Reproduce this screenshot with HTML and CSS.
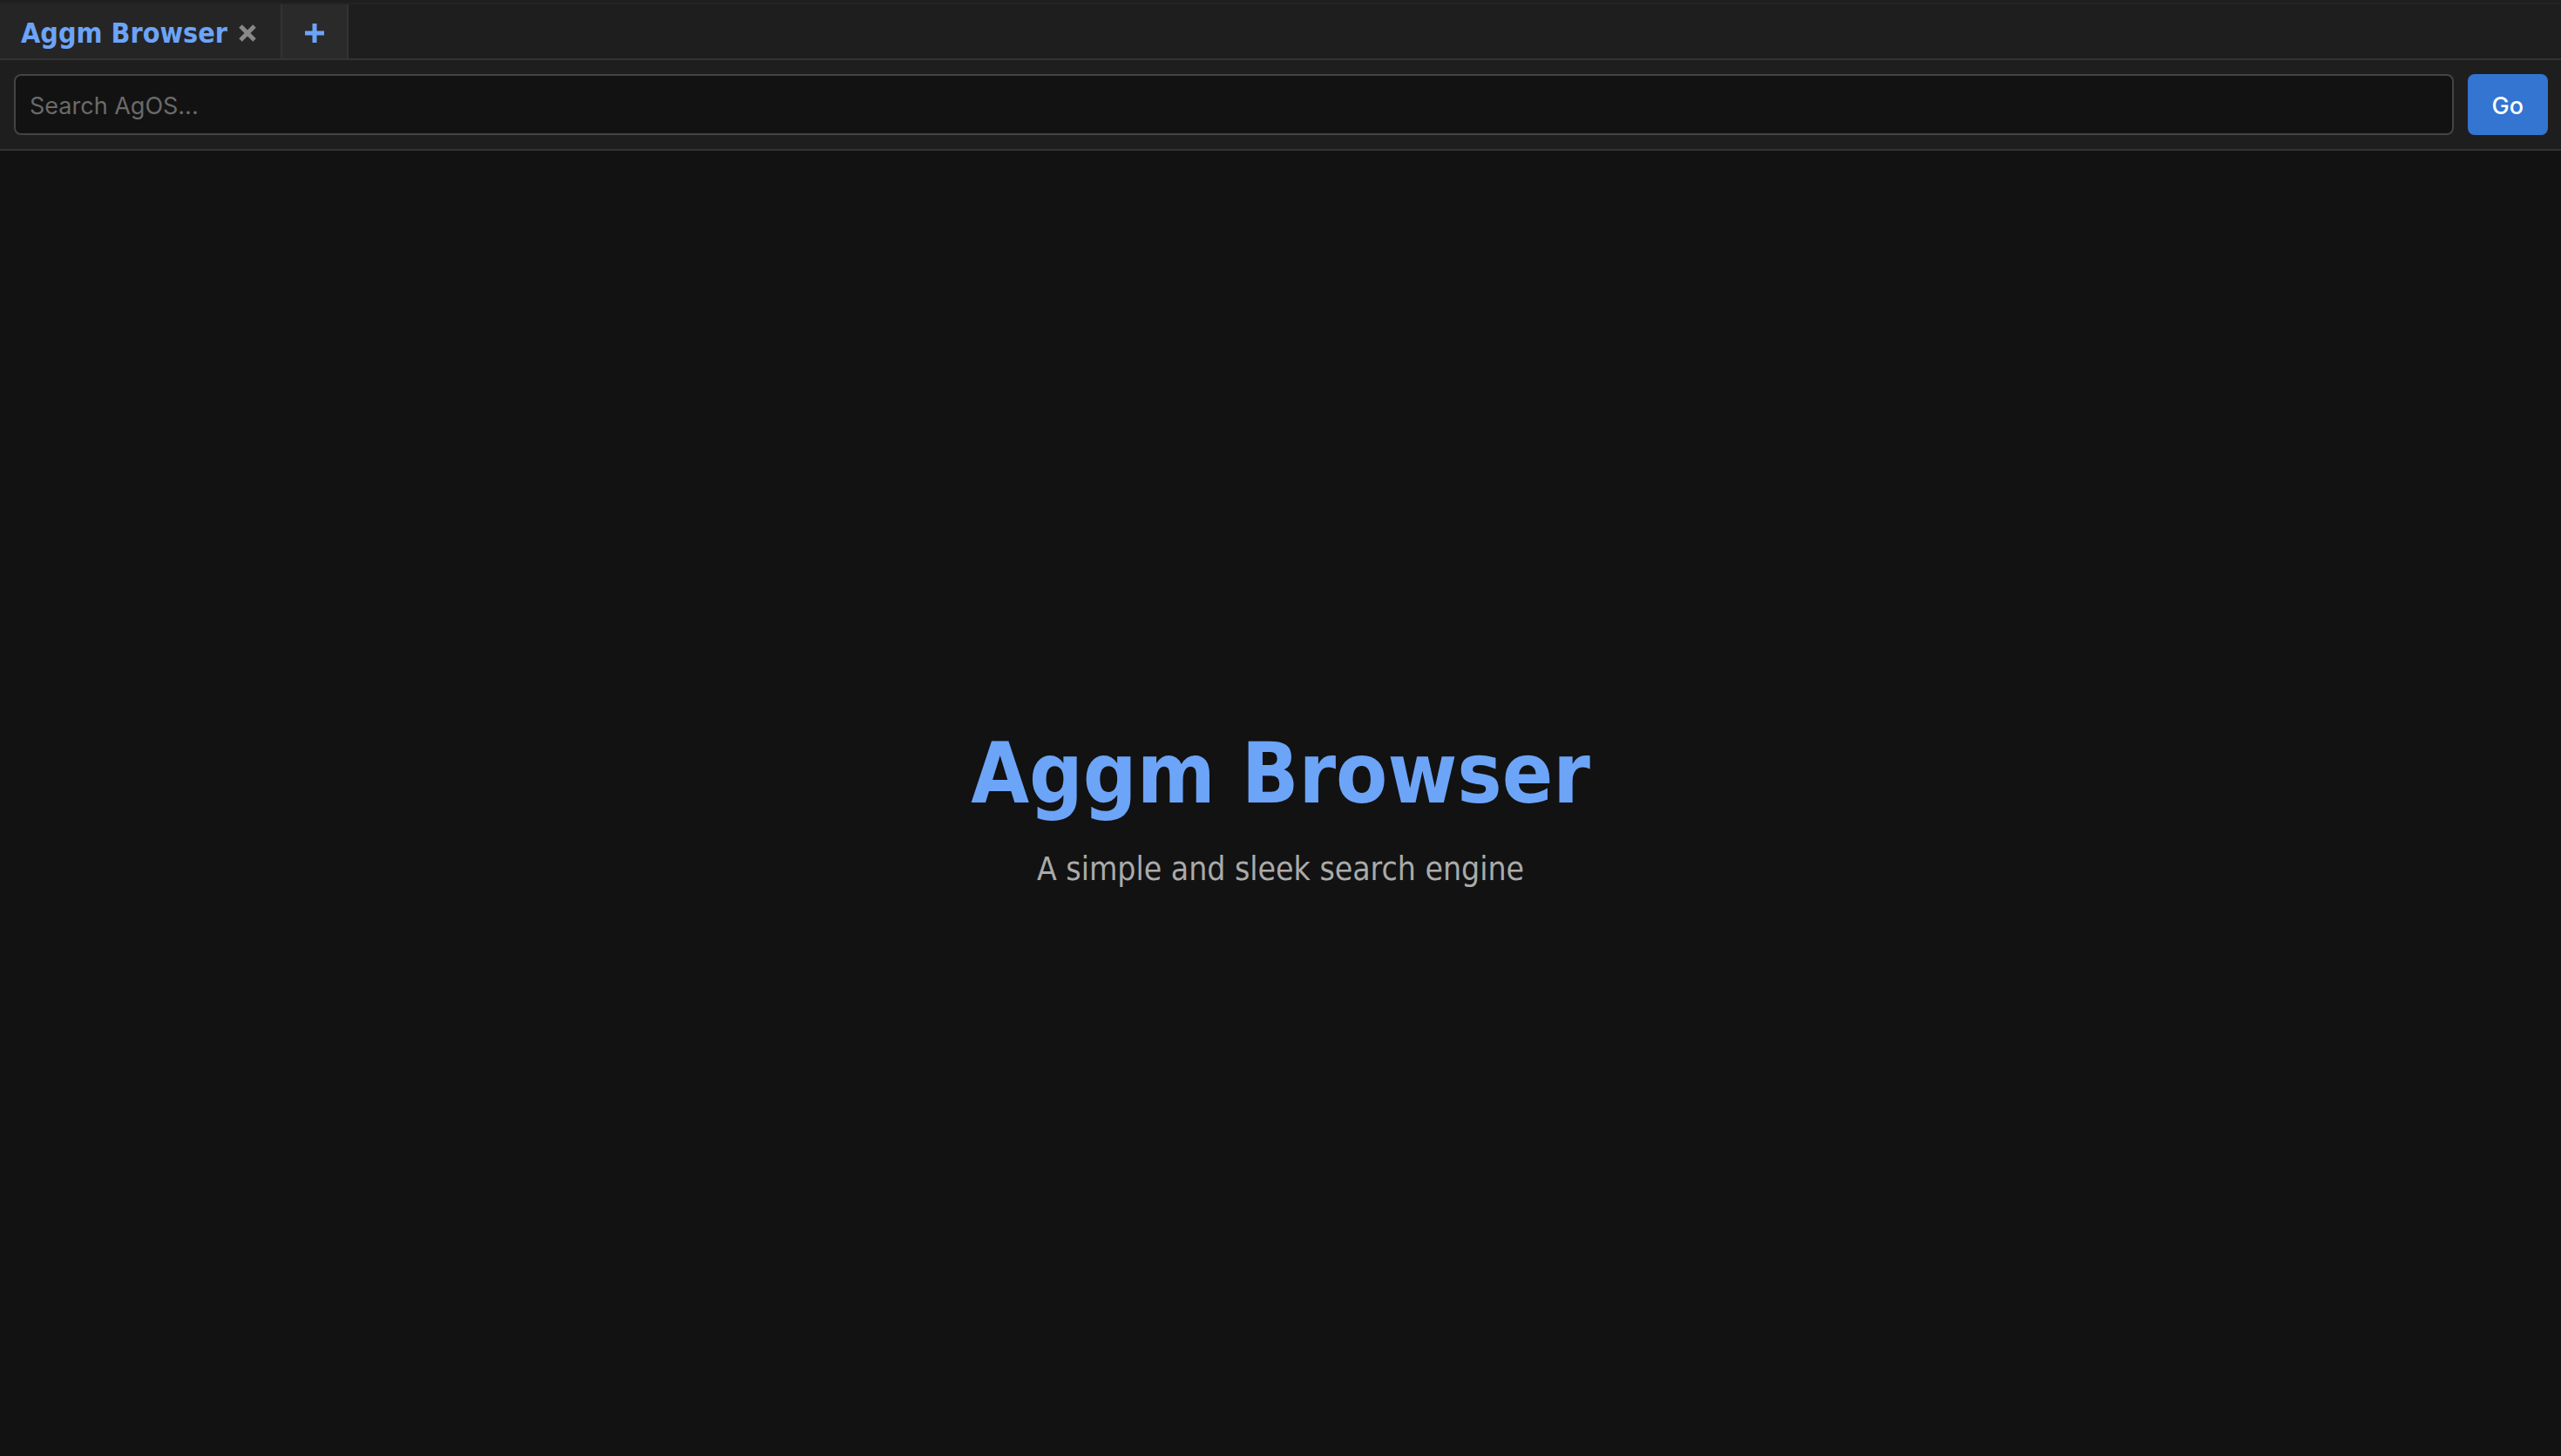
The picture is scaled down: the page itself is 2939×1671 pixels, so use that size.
FILE: index.html
```html
<!DOCTYPE html>
<html lang="en">
<head>
<meta charset="utf-8">
<title>Aggm Browser</title>
<link rel="stylesheet" href="styles.css">
</head>
<body>
<header class="chrome">
  <nav class="tabs" aria-label="Tabs">
    <div class="tab">
      <a class="tab-title" href="#home">Aggm Browser</a>
      <button class="close" type="button" aria-label="Close tab">
        <svg width="20" height="20" viewBox="0 0 20 20" aria-hidden="true"><path d="M2 2L18 18M18 2L2 18"/></svg>
      </button>
    </div>
    <button class="add" type="button" aria-label="New tab">
      <svg width="22" height="22" viewBox="0 0 22 22" aria-hidden="true"><path d="M11 0V22M0 11H22"/></svg>
    </button>
  </nav>
  <form class="toolbar">
    <input class="search" type="text" placeholder="Search AgOS..." aria-label="Search AgOS">
    <button class="go" type="submit">Go</button>
  </form>
</header>
<main class="home" id="home">
  <h1 class="title">Aggm Browser</h1>
  <p class="tagline">A simple and sleek search engine</p>
</main>
</body>
</html>
```
FILE: styles.css
```css
* {
  box-sizing: border-box;
}

body {
  margin: 0;
  min-height: 100vh;
  display: flex;
  flex-direction: column;
  background: #121212;
  color: #aaa;
  font-family: Tahoma, "DejaVu Sans Condensed", "Noto Sans", sans-serif;
}

button {
  border: 0;
  padding: 0;
  font: inherit;
  cursor: pointer;
}

svg {
  display: block;
  fill: none;
  stroke: currentColor;
}

.chrome {
  padding-top: 3px;
  background: #1e1e1e;
}

.tabs {
  display: flex;
  height: 66px;
  border-top: 2px solid #232323;
  border-bottom: 2px solid #333;
}

.tab {
  display: flex;
  align-items: center;
  gap: 13px;
  padding: 4px 28px 0 24px;
  background: #252525;
  border-right: 2px solid #333;
}

.tab-title {
  color: #6ca4f8;
  font-size: 32px;
  font-weight: bold;
  line-height: 40px;
  text-decoration: none;
}

.close {
  background: none;
  color: #888;
  stroke-width: 5px;
}

.add {
  display: flex;
  align-items: center;
  justify-content: center;
  width: 76px;
  padding-top: 4px;
  background: #2a2a2a;
  border-right: 2px solid #333;
  color: #6ca4f8;
  stroke-width: 5px;
}

.toolbar {
  display: flex;
  gap: 16px;
  padding: 16px 15px 16px 16px;
  border-bottom: 2px solid #333;
}

.search,
.go {
  height: 70px;
  border-radius: 8px;
  font-family: Inter, "Liberation Sans", sans-serif;
  font-size: 27px;
}

.search {
  flex: 1;
  min-width: 0;
  padding: 2px 16px 0;
  background: #121212;
  border: 2px solid #444;
  color: #eee;
}

.search::placeholder {
  color: #6a6a6a;
}

.go {
  padding: 2px 28px 0;
  background: #3375d0;
  color: #fff;
  font-weight: 500;
}

.home {
  flex: 1;
  display: flex;
  flex-direction: column;
  align-items: center;
  justify-content: center;
  padding-top: 8px;
  text-align: center;
}

.title {
  margin: 0;
  color: #6ca4f8;
  font-size: 96px;
  line-height: 116px;
}

.tagline {
  margin: 28px 0 0;
  font-size: 37px;
  line-height: 48px;
}
```
